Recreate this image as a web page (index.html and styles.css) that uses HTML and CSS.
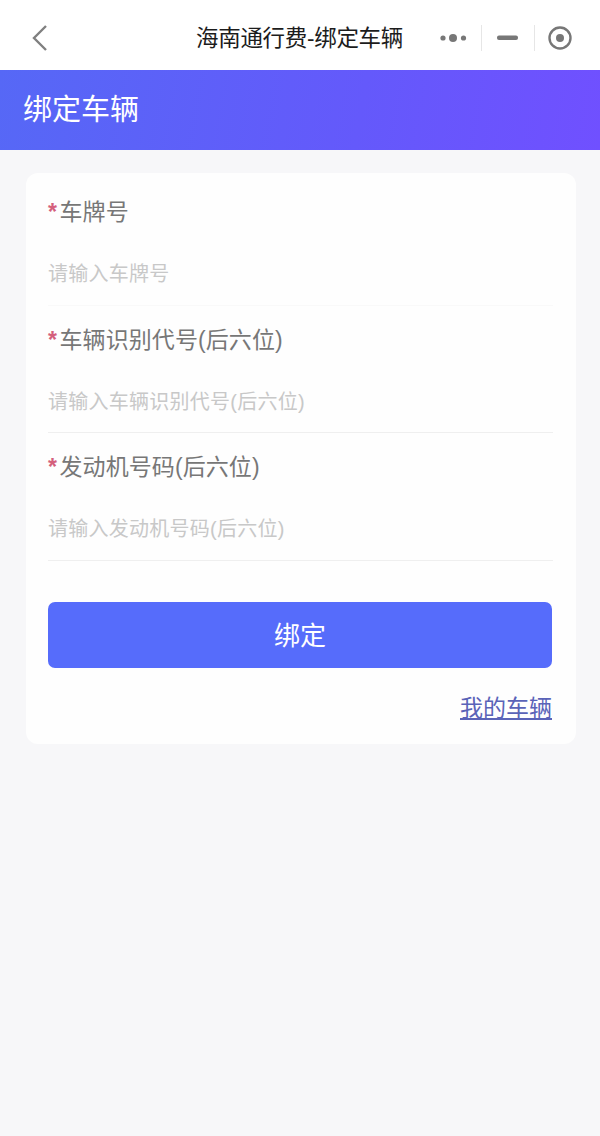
FILE: index.html
```html
<!DOCTYPE html>
<html lang="zh-CN">
<head>
<meta charset="utf-8">
<title>海南通行费-绑定车辆</title>
<link rel="stylesheet" href="styles.css">
</head>
<body>
<nav class="nav">
  <svg class="back" width="20" height="28" viewBox="0 0 20 28"><path d="M16 2 L4 14 L16 26" fill="none" stroke="#808080" stroke-width="2.4"/></svg>
  <div class="nav-title">海南通行费-绑定车辆</div>
  <div class="capsule">
    <div class="cap-item cap-more">
      <svg width="30" height="12" viewBox="0 0 30 12"><circle cx="4" cy="6" r="2.6" fill="#777"/><circle cx="14" cy="6" r="4" fill="#777"/><circle cx="24.500" cy="6" r="2.600" fill="#777"/></svg>
    </div>
    <div class="cap-item cap-min">
      <svg width="22" height="6" viewBox="0 0 22 6"><rect x="0" y="0.500" width="21" height="4.500" rx="2" fill="#777"/></svg>
    </div>
    <div class="cap-item cap-close">
      <svg width="26" height="26" viewBox="0 0 26 26"><circle cx="13" cy="13" r="10.500" fill="none" stroke="#777" stroke-width="2.400"/><circle cx="13" cy="13" r="4" fill="#777"/></svg>
    </div>
  </div>
</nav>
<header class="banner">绑定车辆</header>
<main class="card">
  <div class="field field-faint">
    <div class="label"><span class="req">*</span>车牌号</div>
    <div class="placeholder">请输入车牌号</div>
  </div>
  <div class="field">
    <div class="label"><span class="req">*</span>车辆识别代号(后六位)</div>
    <div class="placeholder">请输入车辆识别代号(后六位)</div>
  </div>
  <div class="field">
    <div class="label"><span class="req">*</span>发动机号码(后六位)</div>
    <div class="placeholder">请输入发动机号码(后六位)</div>
  </div>
  <button class="submit" type="button">绑定</button>
  <div class="links"><a class="link" href="#">我的车辆</a></div>
</main>
</body>
</html>
```
FILE: styles.css
```css
* { box-sizing: border-box; }
html, body { margin: 0; padding: 0; }
body {
  width: 600px;
  height: 1136px;
  overflow: hidden;
  background: #f7f7f9;
  font-family: "Liberation Sans", "Noto Sans CJK SC", sans-serif;
}
.nav {
  height: 70px;
  background: #fff;
  display: flex;
  align-items: center;
  padding: 6px 0 0 30px;
}
.back { flex: none; }
.nav-title {
  margin-left: 146px;
  margin-top: -4px;
  width: 210px;
  font-size: 22.500px;
  letter-spacing: -0.3px;
  color: #1c1c1c;
  white-space: nowrap;
}
.capsule {
  display: flex;
  align-items: center;
  margin-left: 20px;
}
.cap-item {
  display: flex;
  align-items: center;
  justify-content: center;
  height: 26px;
}
.cap-more { width: 56px; padding-left: 1px; border-right: 1px solid #e6e6e6; }
.cap-min { width: 53px; border-right: 1px solid #e6e6e6; }
.cap-close { width: 50px; }
.banner {
  height: 80px;
  background: linear-gradient(100deg, #5668f6 0%, #6459fb 60%, #7050ff 100%);
  color: #fff;
  font-size: 29px;
  line-height: 80px;
  padding-left: 23px;
}
.card {
  margin: 23px 24px 0 26px;
  width: 550px;
  height: 571px;
  background: #fefefe;
  border-radius: 12px;
  padding: 0 23px 0 22px;
}
.field {
  height: 127.500px;
  border-bottom: 1px solid #efefef;
  padding-top: 22px;
}
.field-faint { border-bottom-color: #f9f9f9; height: 132.500px; }
.field + .field { height: 127.500px; padding-top: 17px; }
.label {
  font-size: 23px;
  line-height: 34px;
  color: #777;
  letter-spacing: 0.08px;
  white-space: nowrap;
}
.req { display: inline-block; width: 11.500px; color: #d4607c; font-weight: bold; }
.placeholder {
  font-size: 20px;
  line-height: 30px;
  margin-top: 30px;
  color: #c8c8c8;
  letter-spacing: 0.25px;
  white-space: nowrap;
}
.submit {
  display: block;
  width: 504px;
  height: 66px;
  margin-top: 41px;
  border: 0;
  border-radius: 7px;
  background: #566cfb;
  color: #fff;
  font-family: inherit;
  font-size: 26px;
  padding: 0 0 2px;
}
.links {
  margin-top: 24px;
  padding-right: 1px;
  text-align: right;
  line-height: 32px;
}
.link {
  font-size: 23px;
  color: #5a63b8;
  text-decoration: underline;
}
```
